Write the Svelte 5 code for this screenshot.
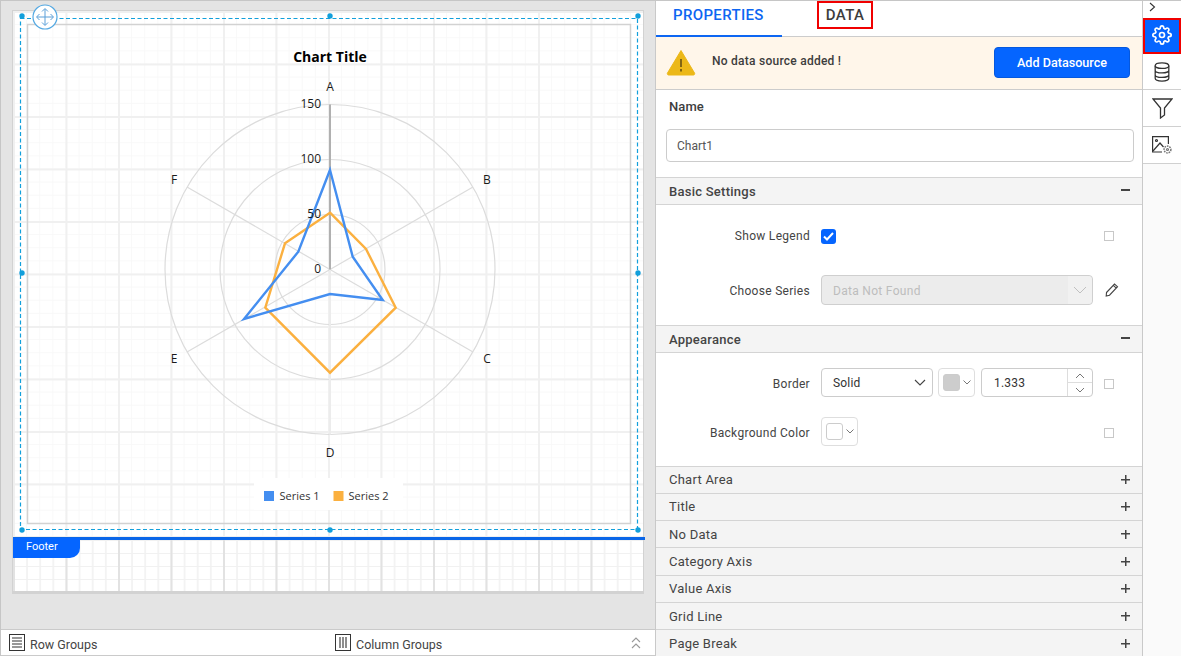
<script>
  const cx = 330, cy = 269.5;
  const spokes = [[330,104.5],[473,187],[473,352],[330,434.5],[187,352],[187,187]];
  const series1 = "330,170 352.7,256.7 382.7,300 330,294 244,319 298.3,251.7";
  const series2 = "330,212.7 366,249 395.7,307.7 330,372.7 265.3,307.7 285,243.3";
  const radial = [
    { t: "A", x: 330, y: 91 }, { t: "B", x: 487, y: 184 }, { t: "C", x: 487, y: 363 },
    { t: "D", x: 330, y: 457 }, { t: "E", x: 174, y: 363 }, { t: "F", x: 174, y: 184 }
  ];
  const ticks = [{ t: "150", y: 108 }, { t: "100", y: 163 }, { t: "50", y: 218 }, { t: "0", y: 273 }];
  const handles = [[22,16],[330,16],[638,16],[22,273],[638,273],[22,530],[330,530],[638,530]];
  const collapsed = ["Chart Area","Title","No Data","Category Axis","Value Axis","Grid Line","Page Break"];
</script>

<div class="app">
  <div class="left">
    <div class="stage">
      <div class="sheet">
        <div class="body-grid"></div>
        <div class="foot-rule"></div>
        <div class="foot-tab">Footer</div>
        <div class="foot-grid"></div>
      </div>
      <svg class="chart" width="655" height="600" viewBox="0 0 655 600">
        <rect x="27.5" y="24.5" width="603" height="499" fill="none" stroke="#d2d2d2" stroke-width="1.5"/>
        <rect x="254" y="478" width="149" height="32" fill="#fff"/>
        <g fill="none" stroke="#dcdcdc" stroke-width="1.2">
          <circle cx={cx} cy={cy} r="55"/>
          <circle cx={cx} cy={cy} r="110"/>
          <circle cx={cx} cy={cy} r="165"/>
          {#each spokes.slice(1) as s}
            <line x1={cx} y1={cy} x2={s[0]} y2={s[1]}/>
          {/each}
        </g>
        <line x1={cx} y1={cy} x2="330" y2="434.5" stroke="#ececec" stroke-width="2"/>
        <line x1={cx} y1={cy} x2="330" y2="104.5" stroke="#b0b0b0" stroke-width="2"/>
        <polygon points={series2} fill="none" stroke="#fbb03f" stroke-width="2.4"/>
        <polygon points={series1} fill="none" stroke="#448ef0" stroke-width="2.4"/>
        <text class="ctitle" x="330" y="62" text-anchor="middle">Chart Title</text>
        {#each radial as l}
          <text class="clabel" x={l.x} y={l.y} text-anchor="middle">{l.t}</text>
        {/each}
        {#each ticks as l}
          <text class="clabel" x="321" y={l.y} text-anchor="end">{l.t}</text>
        {/each}
        <rect x="264" y="491" width="10" height="10" fill="#448ef0"/>
        <text class="clegend" x="279.5" y="500">Series 1</text>
        <rect x="333.500" y="491" width="10" height="10" fill="#fbb03f"/>
        <text class="clegend" x="348.500" y="500">Series 2</text>
        <rect x="20.500" y="18.500" width="617" height="511" fill="none" stroke="#12a0dc" stroke-width="1.2" stroke-dasharray="4 2.500"/>
        {#each handles as h}
          <circle cx={h[0]} cy={h[1]} r="2.700" fill="#129fdb"/>
        {/each}
        <circle cx="45" cy="17" r="12" fill="#fff" stroke="#53a8e2" stroke-width="1.200"/>
        <g fill="none" stroke="#5a9fd8" stroke-width="1">
          <path d="M37 17h16M45 9v16"/>
          <path d="M39.500 14l-3 3 3 3M50.500 14l3 3-3 3M42 11.500l3-3 3 3M42 22.500l3 3 3-3"/>
        </g>
      </svg>
    </div>
    <div class="groups">
      <div class="group first">
        <svg width="16" height="17" viewBox="0 0 16 17"><rect x=".5" y=".5" width="15" height="16" fill="none" stroke="#333"/><path d="M3 4h10M3 7h10M3 10h10M3 13h10" stroke="#777" stroke-width="1.600"/></svg>
        <span>Row Groups</span>
      </div>
      <div class="group second">
        <svg width="16" height="17" viewBox="0 0 16 17"><rect x=".5" y=".5" width="15" height="16" fill="none" stroke="#333"/><path d="M5 3v11M8 3v11M11 3v11" stroke="#444" stroke-width="1.200"/></svg>
        <span>Column Groups</span>
      </div>
      <svg class="dbl" width="10" height="13" viewBox="0 0 10 13"><path d="M1 6l4-4 4 4M1 12l4-4 4 4" fill="none" stroke="#999" stroke-width="1.100"/></svg>
    </div>
  </div>

  <div class="panel">
    <div class="tabs">
      <div class="tab active">PROPERTIES</div>
      <div class="tab data">DATA</div>
    </div>
    <div class="banner">
      <svg class="warn-icon" width="30" height="27" viewBox="0 0 30 27"><path d="M15 1.500L28.500 24a1.300 1.300 0 0 1-1 2H2.500a1.300 1.300 0 0 1-1-2z" fill="#ecb818" stroke="#ecb818" stroke-linejoin="round"/><path d="M15 10v8M15 20v2.500" stroke="#4a3a10" stroke-width="1.300"/></svg>
      <span class="warn">No data source added !</span>
      <button class="add">Add Datasource</button>
    </div>
    <div class="name">
      <div class="name-label">Name</div>
      <div class="name-input">Chart1</div>
    </div>

    <div class="head"><span>Basic Settings</span><i class="minus"></i></div>
    <div class="sect basic">
      <div class="row">
        <label>Show Legend</label>
        <span class="check"><svg width="11" height="9" viewBox="0 0 11 9"><path d="M1 4.500l3 3 6-6.500" fill="none" stroke="#fff" stroke-width="2"/></svg></span>
        <span class="box"></span>
      </div>
      <div class="row">
        <label>Choose Series</label>
        <div class="disabled"><span>Data Not Found</span><b><svg width="14" height="8" viewBox="0 0 14 8"><path d="M1 1l6 6 6-6" fill="none" stroke="#c0c0c0"/></svg></b></div>
        <svg class="pencil" width="14" height="15" viewBox="0 0 14 15"><path d="M1.500 10.500L9.500 2l3 2.700-8 8.500-3.300.8zM8.300 3.300l3 2.800" fill="none" stroke="#444" stroke-width="1.100"/></svg>
      </div>
    </div>

    <div class="head"><span>Appearance</span><i class="minus"></i></div>
    <div class="sect appear">
      <div class="row">
        <label>Border</label>
        <div class="select"><span>Solid</span><svg width="12" height="7" viewBox="0 0 12 7"><path d="M1 1l5 5 5-5" fill="none" stroke="#444" stroke-width="1.100"/></svg></div>
        <div class="color c1"><i class="swatch grey"></i><svg width="8" height="5" viewBox="0 0 8 5"><path d="M.5.500L4 4 7.500.5" fill="none" stroke="#777"/></svg></div>
        <div class="num">
          <span>1.333</span>
          <div class="spin">
            <b><svg width="10" height="6" viewBox="0 0 10 6"><path d="M1 5l4-4 4 4" fill="none" stroke="#777"/></svg></b>
            <b><svg width="10" height="6" viewBox="0 0 10 6"><path d="M1 1l4 4 4-4" fill="none" stroke="#777"/></svg></b>
          </div>
        </div>
        <span class="box"></span>
      </div>
      <div class="row">
        <label>Background Color</label>
        <div class="color"><i class="swatch"></i><svg width="8" height="5" viewBox="0 0 8 5"><path d="M.5.500L4 4 7.500.5" fill="none" stroke="#777"/></svg></div>
        <span class="box"></span>
      </div>
    </div>

    <div class="stack">
      {#each collapsed as c}
        <div class="head plain"><span>{c}</span><i class="plus"></i></div>
      {/each}
    </div>
  </div>

  <div class="rail">
    <div class="chev"><svg width="7" height="10" viewBox="0 0 7 10"><path d="M1 1l4.500 4L1 9" fill="none" stroke="#333" stroke-width="1.100"/></svg></div>
    <div class="rb gear">
      <svg width="20" height="20" viewBox="0 0 24 24" fill="none" stroke="#fff" stroke-width="2"><circle cx="12" cy="12" r="3"/><path d="M19.400 15a1.650 1.650 0 0 0 .33 1.820l.06.06a2 2 0 0 1 0 2.830 2 2 0 0 1-2.830 0l-.06-.06a1.650 1.650 0 0 0-1.820-.33 1.650 1.650 0 0 0-1 1.510V21a2 2 0 0 1-2 2 2 2 0 0 1-2-2v-.09A1.650 1.650 0 0 0 9 19.400a1.650 1.650 0 0 0-1.820.33l-.06.06a2 2 0 0 1-2.830 0 2 2 0 0 1 0-2.830l.06-.06a1.650 1.650 0 0 0 .33-1.820 1.650 1.650 0 0 0-1.510-1H3a2 2 0 0 1-2-2 2 2 0 0 1 2-2h.09A1.650 1.650 0 0 0 4.600 9a1.650 1.650 0 0 0-.33-1.820l-.06-.06a2 2 0 0 1 0-2.830 2 2 0 0 1 2.830 0l.06.06a1.650 1.650 0 0 0 1.820.33H9a1.650 1.650 0 0 0 1-1.510V3a2 2 0 0 1 2-2 2 2 0 0 1 2 2v.09a1.650 1.650 0 0 0 1 1.510 1.650 1.650 0 0 0 1.820-.33l.06-.06a2 2 0 0 1 2.830 0 2 2 0 0 1 0 2.830l-.06.06a1.650 1.650 0 0 0-.33 1.820V9a1.650 1.650 0 0 0 1.510 1H21a2 2 0 0 1 2 2 2 2 0 0 1-2 2h-.09a1.650 1.650 0 0 0-1.510 1z"/></svg>
    </div>
    <div class="rb db">
      <svg width="16" height="20" viewBox="0 0 17 22" fill="none" stroke="#333" stroke-width="1.400"><ellipse cx="8.500" cy="4" rx="7.500" ry="3"/><path d="M1 4v14c0 1.700 3.400 3 7.500 3s7.500-1.300 7.500-3V4M1 9c0 1.700 3.400 3 7.500 3S16 10.700 16 9M1 14c0 1.700 3.400 3 7.500 3s7.500-1.300 7.500-3"/></svg>
    </div>
    <div class="rb fl">
      <svg width="21" height="21" viewBox="0 0 21 21" fill="none" stroke="#333" stroke-width="1.300"><path d="M1 1h19l-7.500 9v7l-4 3V10z"/></svg>
    </div>
    <div class="rb im">
      <svg width="22" height="20" viewBox="0 0 22 20" fill="none" stroke="#333" stroke-width="1.200"><path d="M11 17H1.600V1.600h15.800V9"/><circle cx="5.500" cy="5.500" r="1" /><path d="M2 16l7-8 3.500 4"/><circle cx="16.500" cy="14.500" r="3.400" stroke="#777" stroke-dasharray="1.600 .9" stroke-width="1.500"/><circle cx="16.500" cy="14.500" r="1" stroke="#777"/></svg>
    </div>
    <div class="rest"></div>
  </div>
</div>

<style>
  :global(body) { margin: 0; }
  .app { display: flex; width: 1181px; height: 656px; overflow: hidden; font-family: Roboto, sans-serif; color: #333; background: #fff; box-sizing: border-box; border-top: 1px solid #c6c6c6; }
  .left { width: 655px; flex: none; display: flex; flex-direction: column; border-left: 1px solid #c6c6c6; box-sizing: border-box; }
  .stage { position: relative; flex: 1; background: #e4e4e4; padding: 10px 11px 0 12px; min-height: 0; }
  .sheet { position: relative; width: 630px; height: 582px; background: #fff; box-shadow: 0 0 0 1px #d2d2d2; display: flex; flex-direction: column; }
  .body-grid {
    height: 526px;
    flex: none;
    background-image:
      linear-gradient(to right, #f0f0f0 2px, transparent 2px),
      linear-gradient(to bottom, #f0f0f0 2px, transparent 2px),
      linear-gradient(to right, #f8f8f8 1px, transparent 1px),
      linear-gradient(to bottom, #f8f8f8 1px, transparent 1px);
    background-size: 52.5px 52.5px, 52.5px 52.5px, 13.125px 13.125px, 13.125px 13.125px;
  }
  .foot-rule { height: 2.5px; background: #0a66e8; margin-right: -2px; flex: none; }
  .foot-grid {
    flex: 1;
    background-image:
      linear-gradient(to right, #e2e2e2 1.5px, transparent 1.5px),
      linear-gradient(to bottom, #f1f1f1 1.5px, transparent 1.5px),
      linear-gradient(to right, #f3f3f3 1.5px, transparent 1.5px);
    background-size: 52.5px 52.5px, 13px 13px, 13.125px 13.125px;
    background-position: 0 0, 0 0, 0 0;
    border-bottom: 2px solid #d2d2d2;
  }
  .foot-tab { position: absolute; left: 0; top: 527px; width: 67px; height: 20px; background: #0565ff; color: #fff; font-size: 11px; line-height: 17px; padding-left: 13px; box-sizing: border-box; border-bottom-right-radius: 10px; z-index: 2; }
  .chart { position: absolute; left: -1px; top: -1px; pointer-events: none; }
  .ctitle { font: 700 14px "Open Sans", sans-serif; fill: #000; }
  .clabel { font: 400 12px "Open Sans", sans-serif; fill: #1a1a1a; }
  .clegend { font: 400 11px "Open Sans", sans-serif; fill: #333; }

  .groups { position: relative; height: 27px; flex: none; border-top: 1px solid #cacaca; border-bottom: 1px solid #cacaca; box-sizing: border-box; background: #fff; display: flex; align-items: center; font-size: 12.5px; color: #444; }
  .group { display: flex; align-items: flex-end; gap: 5px; }
  .group span { line-height: 15px; position: relative; top: 1px; }
  .first { margin-left: 8px; width: 326px; }
  .second { flex: 1; }
  .dbl { margin-right: 14px; }

  .panel { width: 487px; flex: none; border-left: 1px solid #c9c9c9; box-sizing: border-box; display: flex; flex-direction: column; overflow: hidden; }
  .tabs { height: 36px; flex: none; display: flex; border-bottom: 1px solid #cccccc; box-sizing: border-box; position: relative; }
  .tab { font-size: 15px; font-weight: 500; letter-spacing: .35px; line-height: 28px; }
  .active { width: 126px; box-sizing: border-box; height: 36px; padding-left: 17px; color: #0d66f2; border-bottom: 2px solid #0d66f2; }
  .data { position: absolute; left: 161px; top: 0; width: 56px; height: 28px; box-sizing: border-box; border: 2px solid #f00000; text-align: center; line-height: 25px; color: #3d3d3d; }
  .banner { height: 53px; flex: none; box-sizing: border-box; background: #fff6ea; border-bottom: 1px solid #cccccc; display: flex; align-items: center; padding: 0 12px 0 10px; }
  .warn-icon { margin-bottom: 2px; }
  .warn { margin-left: 16px; font-size: 12px; font-weight: 500; letter-spacing: .25px; flex: 1; position: relative; top: -2px; color: #3d3d3d; }
  .add { width: 136px; height: 31px; margin-bottom: 2px; background: #0565ff; color: #fff; border: 1px solid #0558de; border-radius: 4px; font: 500 12.6px Roboto, sans-serif; padding: 0; }
  .name { height: 87px; flex: none; box-sizing: border-box; padding: 9px 8px 0 10px; }
  .name-label { font-size: 13px; font-weight: 500; line-height: 15px; margin: 0 0 15px 3px; color: #3d3d3d; letter-spacing: .1px; }
  .name-input { height: 33px; box-sizing: border-box; border: 1px solid #ccc; border-radius: 4px; font-size: 12px; line-height: 33px; padding-left: 10px; color: #555; }

  .head { height: 28px; flex: none; box-sizing: border-box; background: #f4f4f4; border-top: 1px solid #d4d4d4; border-bottom: 1px solid #d4d4d4; display: flex; align-items: center; justify-content: space-between; padding: 0 12px 0 13px; font-size: 13px; font-weight: 500; letter-spacing: .25px; color: #444; }
  .minus { width: 9px; height: 1.500px; background: #444; position: relative; top: -1px; }
  .sect { flex: none; box-sizing: border-box; padding-top: 15px; display: flex; flex-direction: column; }
  .basic { height: 120px; gap: 25px; }
  .appear { height: 113px; gap: 20px; }
  .row { display: flex; align-items: center; min-height: 29px; position: relative; }
  .basic .row { height: 30px; }
  .row label { width: 154px; margin-right: 11px; text-align: right; font-size: 12px; flex: none; color: #444; letter-spacing: .3px; position: relative; top: 1px; }
  .check { width: 15px; height: 15px; border-radius: 3px; background: #0565ff; display: flex; align-items: center; justify-content: center; position: relative; top: 1px; }
  .box { position: absolute; left: 448px; top: 50%; margin-top: -4px; width: 10px; height: 10px; box-sizing: border-box; border: 1px solid #c8c8c8; }
  .disabled { width: 272px; height: 30px; box-sizing: border-box; background: #ececec; border: 1px solid #cfcfcf; border-radius: 4px; display: flex; align-items: center; justify-content: space-between; font-size: 12px; color: #bdbdbd; padding-left: 11px; letter-spacing: .3px; }
  .disabled span { position: relative; top: 1px; }
  .disabled b { width: 24px; height: 28px; background: #f1f1f1; border-radius: 0 4px 4px 0; display: flex; align-items: center; justify-content: center; }
  .pencil { margin-left: 12px; margin-top: -2px; }
  .select { width: 112px; height: 29px; box-sizing: border-box; border: 1px solid #ccc; border-radius: 4px; display: flex; align-items: center; justify-content: space-between; font-size: 12px; padding: 0 6px 0 11px; letter-spacing: .2px; }
  .color { width: 37px; height: 29px; box-sizing: border-box; border: 1px solid #dedede; border-radius: 4px; display: flex; align-items: center; gap: 3px; padding-left: 4px; }
  .c1 { margin-left: 5px; }
  .swatch { width: 17px; height: 17px; box-sizing: border-box; border-radius: 3px; border: 1px solid #ccc; background: #fff; }
  .grey { background: #cdcdcd; }
  .num { margin-left: 6px; width: 112px; height: 29px; box-sizing: border-box; border: 1px solid #ccc; border-radius: 4px; display: flex; align-items: center; justify-content: space-between; font-size: 12px; padding-left: 12px; letter-spacing: .2px; }
  .spin { width: 24px; height: 27px; border-left: 1px solid #ddd; display: flex; flex-direction: column; }
  .spin b { flex: 1; display: flex; align-items: center; justify-content: center; }
  .spin b:first-child { border-bottom: 1px solid #ddd; }
  .stack { flex: none; display: flex; flex-direction: column; }
  .plain { height: 27.3px; font-weight: 400; border-top: 0; }
  .plain:first-child { border-top: 1px solid #d4d4d4; height: 27.8px; }
  .plus { width: 9px; height: 9px; background: linear-gradient(#444,#444) center/9px 1.500px no-repeat, linear-gradient(#444,#444) center/1.500px 9px no-repeat; }

  .rail { width: 39px; flex: none; border-left: 1px solid #c9c9c9; box-sizing: border-box; display: flex; flex-direction: column; }
  .chev { height: 17px; flex: none; display: flex; padding: 1px 0 0 6px; box-sizing: border-box; align-items: flex-start; }
  .rb { flex: none; display: flex; align-items: center; justify-content: center; border-bottom: 1px solid #d0d0d0; box-sizing: border-box; }
  .gear { height: 36px; background: #0565ff; border: 2px solid #f00000; padding-bottom: 2px; }
  .db { height: 36px; }
  .fl { height: 37px; }
  .im { height: 37px; }
  .rest { flex: 1; background: #fafafa; }
</style>
